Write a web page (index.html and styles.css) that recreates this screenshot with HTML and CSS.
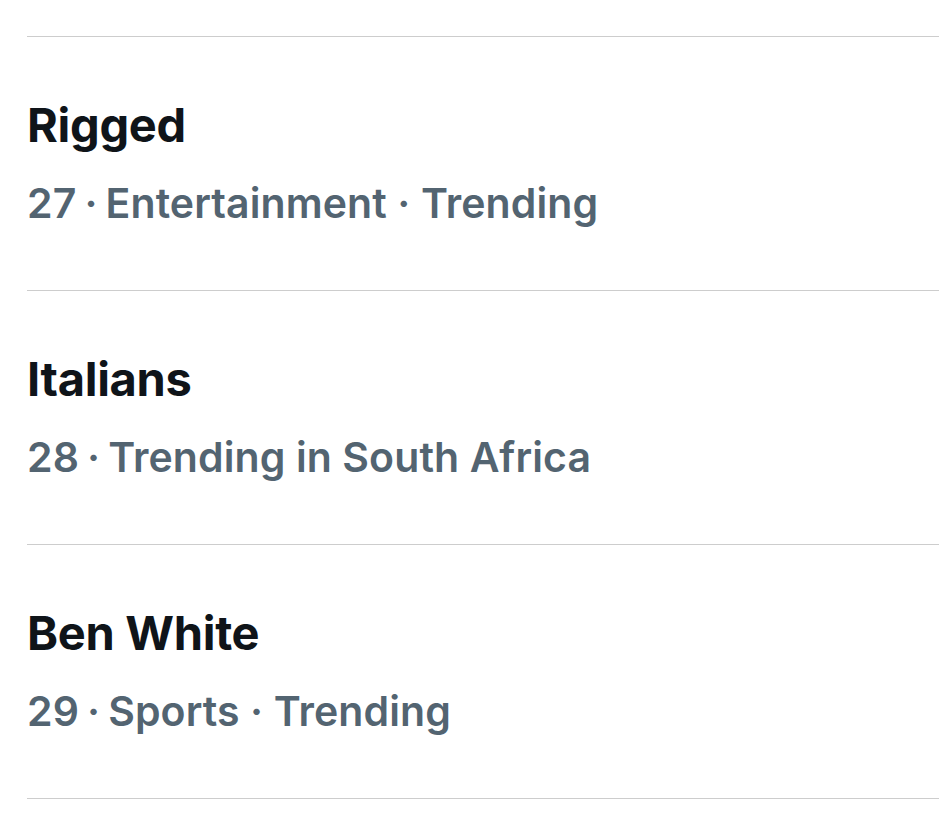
FILE: index.html
```html
<!DOCTYPE html>
<html lang="en">
<head>
<meta charset="utf-8">
<title>Trends</title>
<link rel="stylesheet" href="styles.css">
</head>
<body>
  <ul class="trends">
    <li class="trend">
      <div class="trend-name">Rigged</div>
      <div class="trend-meta"><span class="rank">27</span><span class="sep">·</span>Entertainment · Trending</div>
    </li>
    <li class="trend">
      <div class="trend-name">Italians</div>
      <div class="trend-meta"><span class="rank">28</span><span class="sep">·</span>Trending in South Africa</div>
    </li>
    <li class="trend">
      <div class="trend-name">Ben White</div>
      <div class="trend-meta"><span class="rank">29</span><span class="sep">·</span>Sports · Trending</div>
    </li>
  </ul>
</body>
</html>
```
FILE: styles.css
```css
html, body {
  margin: 0;
  padding: 0;
  background: #ffffff;
}

body {
  font-family: Inter, "Noto Sans", sans-serif;
  -webkit-font-smoothing: antialiased;
}

.trends {
  list-style: none;
  margin: 36px 0 0 27px;
  padding: 0;
  border-top: 1px solid #cdcdcd;
}

.trend {
  border-bottom: 1px solid #cdcdcd;
  padding: 58px 0 40px;
  height: 155px;
}

.trend-name {
  font-size: 47px;
  font-weight: 700;
  line-height: 60px;
  color: #0f1419;
  letter-spacing: -0.3px;
}

.trend-meta {
  margin-top: 21px;
  font-size: 41px;
  font-weight: 600;
  line-height: 54px;
  color: #536471;
  letter-spacing: 0.1px;
}

.sep {
  margin: 0 8px;
}
```
